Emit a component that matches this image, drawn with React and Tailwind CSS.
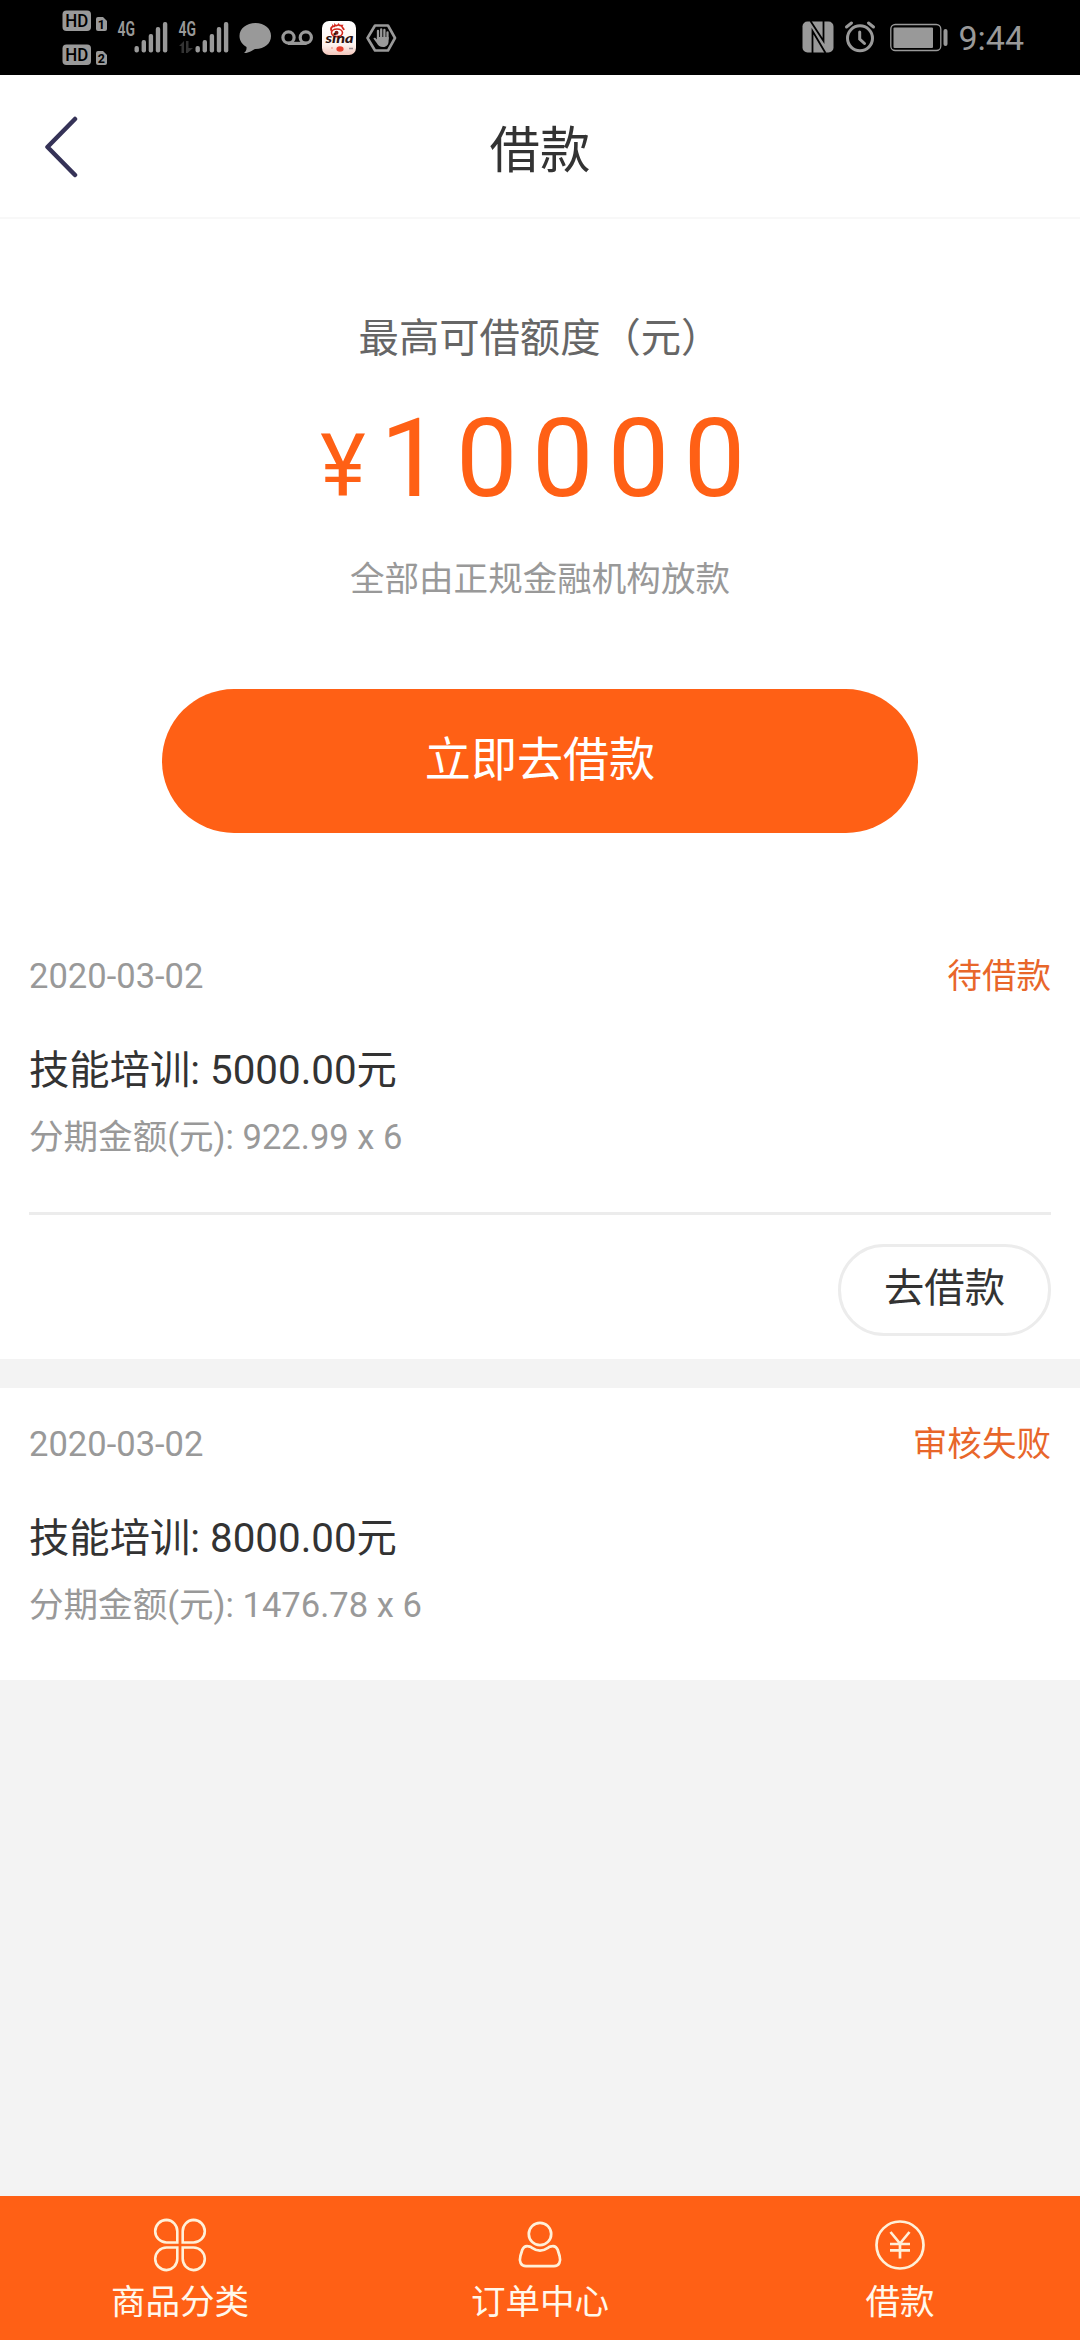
import { useState } from "react";

const orders = [
  {
    id: 1,
    date: "2020-03-02",
    status: "待借款",
    title: "技能培训: 5000.00元",
    detail: "分期金额(元): 922.99 x 6",
    action: "去借款",
  },
  {
    id: 2,
    date: "2020-03-02",
    status: "审核失败",
    title: "技能培训: 8000.00元",
    detail: "分期金额(元): 1476.78 x 6",
  },
];

const tabs = [
  { id: "category", name: "商品分类", icon: CloverIcon },
  { id: "orders", name: "订单中心", icon: UserIcon },
  { id: "loan", name: "借款", icon: YenIcon },
];

// ----------------------------------------------------------
// Tab icons
// ----------------------------------------------------------
function CloverIcon() {
  const petal = "M13 1.4A11.3 11.3 0 1 0 13 24H23.8V12.7A11.3 11.3 0 0 0 13 1.4Z";
  return (
    <svg width="54" height="54" viewBox="0 0 54 54" fill="none" stroke="#fff0d8" strokeWidth="2.6">
      <path d={petal} transform="translate(0.5 0.5)" />
      <path d={petal} transform="translate(53.5 0.5) scale(-1 1)" />
      <path d={petal} transform="translate(0.5 53.5) scale(1 -1)" />
      <path d={petal} transform="translate(53.5 53.5) scale(-1 -1)" />
    </svg>
  );
}

function UserIcon() {
  return (
    <svg width="54" height="54" viewBox="0 0 54 54" fill="none" stroke="#fff0d8" strokeWidth="2.7">
      <circle cx="27" cy="16" r="11.2" />
      <path d="M17 28.6C19 29.2 21.5 32.6 27 32.6S35 29.2 37 28.6C40.5 27.4 43.5 28.5 44.7 31.8L46.6 38C48.1 43.4 46.2 48.2 41 48.2H13C7.8 48.2 5.9 43.4 7.4 38L9.3 31.8C10.5 28.5 13.5 27.4 17 28.6Z" />
    </svg>
  );
}

function YenIcon() {
  return (
    <svg width="54" height="54" viewBox="0 0 54 54" fill="none" stroke="#fff0d8" strokeWidth="2.7">
      <circle cx="27" cy="27" r="23.5" />
      <path d="M17.5 14L27 25.5L36.5 14M17 26H37M17 32.3H37M27 25.5V40.5" />
    </svg>
  );
}

// ----------------------------------------------------------
// Status bar
// ----------------------------------------------------------
function HdBadges() {
  return (
    <svg className="ml-[62px]" width="46" height="75" viewBox="0 0 46 75" fill="#999">
      {[1, 2].map((n) => (
        <g key={n} transform={n === 1 ? "translate(0 10)" : "translate(0 44)"}>
          <rect x="0.5" y="0.5" width="28.5" height="20.5" rx="4" />
          <text x="14.7" y="17" textAnchor="middle" fill="#000" fontSize="18.5" fontWeight="500" fontFamily="Roboto" textLength="23" lengthAdjust="spacingAndGlyphs">HD</text>
          <path d="M36 7H41L45 11V19a2 2 0 0 1-2 2H36a2 2 0 0 1-2-2V9a2 2 0 0 1 2-2Z" />
          <text x="39.3" y="18.5" textAnchor="middle" fill="#000" fontSize="12.5" fontWeight="700" fontFamily="Roboto">{n}</text>
        </g>
      ))}
    </svg>
  );
}

function Signal({ className, arrows }) {
  const tops = [46, 40, 34, 27, 22];
  return (
    <svg className={className} width="51" height="75" viewBox="0 0 51 75" fill="#999">
      <text x="0.5" y="36" fontSize="19.5" fontWeight="600" fontFamily="Roboto" textLength="17.5" lengthAdjust="spacingAndGlyphs">4G</text>
      {arrows && <path d="M1 46L6 41V53H3.5V46ZM8 41H10.5V48H15L9.5 53H8Z" fill="#333" />}
      {tops.map((y, i) => (
        <rect key={y} x={17.5 + i * 7.1} y={y} width="4.4" height={52.5 - y} rx="2" />
      ))}
    </svg>
  );
}

function StatusBar() {
  return (
    <div className="h-[75px] shrink-0 bg-black flex items-center text-[#999]">
      <HdBadges />
      <Signal className="ml-[9px]" />
      <Signal className="ml-[10px]" arrows />
      {/* message */}
      <svg className="ml-[10px]" width="33" height="75" viewBox="0 0 33 75" fill="#999">
        <path d="M16.5 23C25.5 23 32 28.5 32 36S25.5 49 16.5 49C15 49 13.5 50.5 11.5 51.5C9.5 52.5 7 53.3 5 53C7 51.5 7.8 49.5 7.5 47C3.5 44.5 0.5 41 0.5 36C0.5 28.5 7.5 23 16.5 23Z" />
      </svg>
      {/* voicemail */}
      <svg className="ml-[8px]" width="34" height="75" viewBox="0 0 34 75" fill="none" stroke="#999" strokeWidth="3.2">
        <circle cx="8.5" cy="37.5" r="5.6" />
        <circle cx="25.8" cy="37.5" r="5.6" />
        <path d="M8 43.4H26.5" />
      </svg>
      {/* sina */}
      <svg className="ml-[8px]" width="34" height="34" viewBox="0 0 34 34">
        <defs>
          <linearGradient id="sinaBg" x1="0" y1="0" x2="0" y2="1">
            <stop offset="0" stopColor="#fff" />
            <stop offset="0.7" stopColor="#fdf3ef" />
            <stop offset="1" stopColor="#f3c6bb" />
          </linearGradient>
        </defs>
        <rect width="34" height="34" rx="7" fill="url(#sinaBg)" />
        <path d="M9.5 10C7.5 6 11 6 11 5C12 6 13 5 13 4C14.5 5.5 16 4 16.5 3.5C17 5 19.5 4.5 20 4.5C19 6 21.5 7 22 9" fill="none" stroke="#d3261c" strokeWidth="1.7" />
        <ellipse cx="15" cy="11.8" rx="5.5" ry="3.8" fill="#fff" stroke="#d3261c" strokeWidth="1.6" />
        <circle cx="14.5" cy="11.8" r="2" fill="#7b1a14" />
        <text x="17.5" y="22.3" textAnchor="middle" fontSize="13" fontWeight="900" fontStyle="italic" fontFamily="Lato" fill="#2b1210" textLength="28" lengthAdjust="spacingAndGlyphs">sina</text>
        <ellipse cx="18" cy="28" rx="3.6" ry="2.7" fill="#e8402d" />
        <circle cx="10" cy="27" r="0.9" fill="#f0a294" />
        <path d="M27 27.5H31" stroke="#9a8f95" strokeWidth="1.5" />
      </svg>
      {/* hand blocker */}
      <svg className="ml-[10px]" width="33" height="75" viewBox="0 0 33 75" fill="none" stroke="#999">
        <path d="M9 25.5H22L29 38L22 50.5H9L1.5 38Z" strokeWidth="2.6" strokeLinejoin="round" />
        <path d="M12 38V31M15.2 38V29.5M18.4 38V30M21.5 39V32.5" strokeWidth="2.3" strokeLinecap="round" />
        <path d="M10.9 37H22.6V41C22.6 44.5 20.7 47 17.2 47C13.7 47 12.2 45.5 10.7 43L7.4 38.5C8.2 37.3 9.5 37.5 10.9 39.5Z" fill="#999" stroke="none" />
      </svg>

      <div className="ml-auto flex items-center">
        {/* nfc */}
        <svg width="32" height="75" viewBox="0 0 32 75">
          <rect x="0.5" y="21.5" width="31" height="31" rx="5" fill="#999" />
          <path d="M8.5 21L21.5 41V21M10.5 53V31L23.5 53" fill="none" stroke="#000" strokeWidth="1.8" />
        </svg>
        {/* alarm */}
        <svg className="ml-[10px]" width="32" height="75" viewBox="0 0 32 75" fill="none" stroke="#999" strokeWidth="3" strokeLinecap="round">
          <circle cx="16" cy="38.3" r="12.5" />
          <path d="M2.5 27L7.5 23M29.5 27L24.5 23" />
          <path d="M15.7 32V39L20.5 43.5" />
        </svg>
        {/* battery */}
        <svg className="ml-[14px]" width="58" height="75" viewBox="0 0 58 75">
          <rect x="0.8" y="24.5" width="50" height="26" rx="4.5" fill="none" stroke="#999" strokeWidth="1.3" />
          <rect x="3.5" y="27.5" width="39.5" height="20.5" rx="1" fill="#999" />
          <rect x="53.5" y="29" width="4" height="17" rx="2" fill="#999" />
        </svg>
        <span className="ml-[10px] mr-[56px] text-[34px] leading-none">9:44</span>
      </div>
    </div>
  );
}

function OrderCard({ order }) {
  return (
    <div className="bg-white px-[29px] pt-px">
      <div className="h-28 flex items-center justify-between text-[34.56px]">
        <span className="text-[#999]">{order.date}</span>
        <span className="text-[#e8662a]">{order.status}</span>
      </div>
      <p className="text-[40.32px] leading-[75px] text-[#333]">{order.title}</p>
      <p className="text-[34.56px] leading-[58px] text-[#999] pb-[46px]">{order.detail}</p>

      {order.action && (
        <div className="border-t-3 border-[#ececec] pt-[29px] pb-[23px] flex justify-end">
          <button className="w-[213px] h-[92px] pb-0.5 rounded-full border-3 border-[#ececec] text-[40.32px] leading-none text-[#333]">
            {order.action}
          </button>
        </div>
      )}
    </div>
  );
}

export default function App() {
  const [tab, setTab] = useState("loan");

  return (
    <div className="h-screen flex flex-col bg-[#f3f3f3] font-[Roboto,'Noto_Sans_CJK_SC',sans-serif]">
      <StatusBar />

      {/* Header */}
      <header className="h-36 shrink-0 bg-white border-b-2 border-[#f8f8f8] flex items-center px-[44px]">
        <svg className="mt-[2px]" width="34" height="62" viewBox="0 0 34 62" fill="none" stroke="#353257" strokeWidth="4.5" strokeLinecap="round" strokeLinejoin="round">
          <path d="M31 3L3.5 31L31 59" />
        </svg>
        <h1 className="flex-1 pt-[11px] pr-[34px] text-center text-[50.4px] leading-none text-[#333]">借款</h1>
      </header>

      {/* Credit limit */}
      <section className="bg-white pt-[90px] pb-[87px] flex flex-col items-center">
        <p className="text-[40.32px] leading-[60px] text-[#666]">最高可借额度（元）</p>
        <p className="mt-[35px] text-[109.44px] leading-[110px] tracking-[14.4px] text-[#ff6015]">
          <span className="text-[86.4px] leading-none">¥</span>10000
        </p>
        <p className="mt-10 text-[34.56px] leading-[50px] text-[#999]">全部由正规金融机构放款</p>
        <button className="mt-[85px] w-[756px] h-36 pb-0.5 rounded-full bg-[#ff6015] text-[46.08px] leading-none text-white">
          立即去借款
        </button>
      </section>

      {/* Orders */}
      <main className="flex-1 flex flex-col gap-[29px]">
        {orders.map((order) => (
          <OrderCard key={order.id} order={order} />
        ))}
      </main>

      {/* Tab bar */}
      <nav className="h-36 shrink-0 bg-[#ff6015] grid grid-cols-3">
        {tabs.map((t) => (
          <button
            key={t.id}
            onClick={() => setTab(t.id)}
            aria-current={tab === t.id}
            className="flex flex-col items-center pt-[22px] text-[34.56px] text-[#fff8ec]"
          >
            <t.icon />
            <span className="mt-[5px] leading-[50px]">{t.name}</span>
          </button>
        ))}
      </nav>
    </div>
  );
}
